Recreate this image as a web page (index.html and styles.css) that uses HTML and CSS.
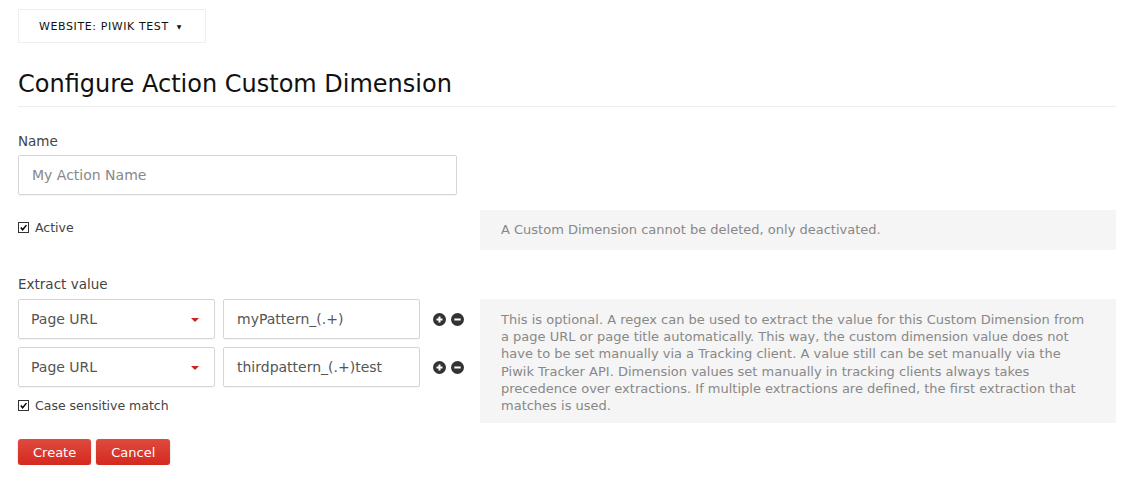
FILE: index.html
```html
<!DOCTYPE html>
<html>
<head>
<meta charset="utf-8">
<link rel="stylesheet" href="styles.css">
</head>
<body>
<div class="page">
  <div class="site-selector">WEBSITE: PIWIK TEST <span class="caret">▼</span></div>
  <h2 class="title">Configure Action Custom Dimension</h2>

  <div class="field">
    <label class="label">Name</label>
    <div class="input wide placeholder">My Action Name</div>
  </div>

  <div class="row active-row">
    <div class="left">
      <label class="check"><span class="box"><svg viewBox="0 0 10 10" width="10" height="10"><path d="M2 4.5 L4 7 L8.3 1.8" fill="none" stroke="#000" stroke-width="1.6"/></svg></span>Active</label>
    </div>
    <div class="info">A Custom Dimension cannot be deleted, only deactivated.</div>
  </div>

  <label class="label extract-label">Extract value</label>
  <div class="row extract">
    <div class="left">
      <div class="pair">
        <div class="input select">Page URL<span class="red-caret"></span></div>
        <div class="input val">myPattern_(.+)</div>
        <div class="icons">
          <svg width="13" height="13" viewBox="0 0 13 13"><circle cx="6.5" cy="6.5" r="6.5" fill="#333"/><path d="M3.5 6.5h6M6.5 3.5v6" stroke="#fff" stroke-width="2"/></svg>
          <svg width="13" height="13" viewBox="0 0 13 13"><circle cx="6.5" cy="6.5" r="6.5" fill="#333"/><path d="M3.3 6.5h6.4" stroke="#fff" stroke-width="2"/></svg>
        </div>
      </div>
      <div class="pair">
        <div class="input select">Page URL<span class="red-caret"></span></div>
        <div class="input val">thirdpattern_(.+)test</div>
        <div class="icons">
          <svg width="13" height="13" viewBox="0 0 13 13"><circle cx="6.5" cy="6.5" r="6.5" fill="#333"/><path d="M3.5 6.5h6M6.5 3.5v6" stroke="#fff" stroke-width="2"/></svg>
          <svg width="13" height="13" viewBox="0 0 13 13"><circle cx="6.5" cy="6.5" r="6.5" fill="#333"/><path d="M3.3 6.5h6.4" stroke="#fff" stroke-width="2"/></svg>
        </div>
      </div>
      <label class="check case"><span class="box"><svg viewBox="0 0 10 10" width="10" height="10"><path d="M2 4.5 L4 7 L8.3 1.8" fill="none" stroke="#000" stroke-width="1.6"/></svg></span>Case sensitive match</label>
    </div>
    <div class="info tall">This is optional. A regex can be used to extract the value for this Custom Dimension from a page URL or page title automatically. This way, the custom dimension value does not have to be set manually via a Tracking client. A value still can be set manually via the Piwik Tracker API. Dimension values set manually in tracking clients always takes precedence over extractions. If multiple extractions are defined, the first extraction that matches is used.</div>
  </div>

  <div class="buttons">
    <button class="btn">Create</button>
    <button class="btn">Cancel</button>
  </div>
</div>
</body>
</html>
```

FILE: styles.css
```css
* { box-sizing: border-box; }
html, body { margin: 0; padding: 0; background: #fff; }
body { font-family: "DejaVu Sans", Verdana, sans-serif; color: #333; }
.page { padding: 9px 10px 0 18px; }

.site-selector {
  display: inline-flex;
  align-items: center;
  height: 34px;
  width: 188px;
  padding: 0 0 0 20px;
  border: 1px solid #eee;
  font-size: 11px;
  letter-spacing: 0.6px;
  color: #111;
}
.site-selector .caret { font-size: 6px; margin-left: 8px; }

.title {
  margin: 26px 0 0 0;
  padding: 0 0 7px 0;
  font-size: 24px;
  font-weight: normal;
  color: #111;
  line-height: 30px;
  border-bottom: 1px solid #eee;
}

.field { margin-top: 25px; }
.label { display: block; font-size: 13.5px; color: #444; line-height: 18px; }

.input {
  display: flex;
  align-items: center;
  height: 40px;
  border: 1px solid #d5d5d5;
  border-radius: 2px;
  font-size: 14px;
  color: #555;
  padding-left: 13px;
  box-shadow: 0 1px 1px rgba(0,0,0,0.04);
}
.input.wide { width: 439px; margin-top: 5px; }
.placeholder { color: #888; }

.row { display: flex; }
.left { width: 462px; }
.check { display: flex; align-items: center; font-size: 12.5px; color: #444; }
.box {
  width: 11px; height: 11px;
  border: 1px solid #333;
  background: #fff;
  margin-right: 6px;
  display: flex; align-items: center; justify-content: center;
}
.box svg { display: block; }

.active-row { margin-top: 15px; }
.active-row .left { padding-top: 10px; }

.info {
  flex: 0 0 636px;
  background: #f5f5f5;
  color: #888;
  font-size: 13px;
  line-height: 17.2px;
  padding: 11px 21px 10px 21px;
  min-height: 40px;
}
.info.tall { padding-top: 12px; padding-bottom: 9px; }

.extract-label { margin-top: 25px; }
.extract { margin-top: 6px; }
.pair { display: flex; align-items: center; margin-bottom: 8px; }
.select { width: 197px; padding-left: 12px; position: relative; color: #555; }
.red-caret {
  position: absolute;
  right: 15px;
  top: 18px;
  width: 0; height: 0;
  border-left: 4px solid transparent;
  border-right: 4px solid transparent;
  border-top: 4px solid #c22;
}
.val { width: 197px; margin-left: 8px; padding-left: 13px; }
.icons { display: flex; gap: 5px; margin-left: 13px; }
.icons svg { display: block; }
.case { margin-top: 11px; }

.buttons { display: flex; gap: 5px; margin-top: 16px; }
.btn {
  height: 26px;
  padding: 0 15px;
  border: none;
  border-radius: 3px;
  background: linear-gradient(#e04a3f, #d4291f);
  color: #fff;
  font-family: "DejaVu Sans", Verdana, sans-serif;
  font-size: 13px;
  box-shadow: 0 1px 2px rgba(0,0,0,0.25);
}
```
